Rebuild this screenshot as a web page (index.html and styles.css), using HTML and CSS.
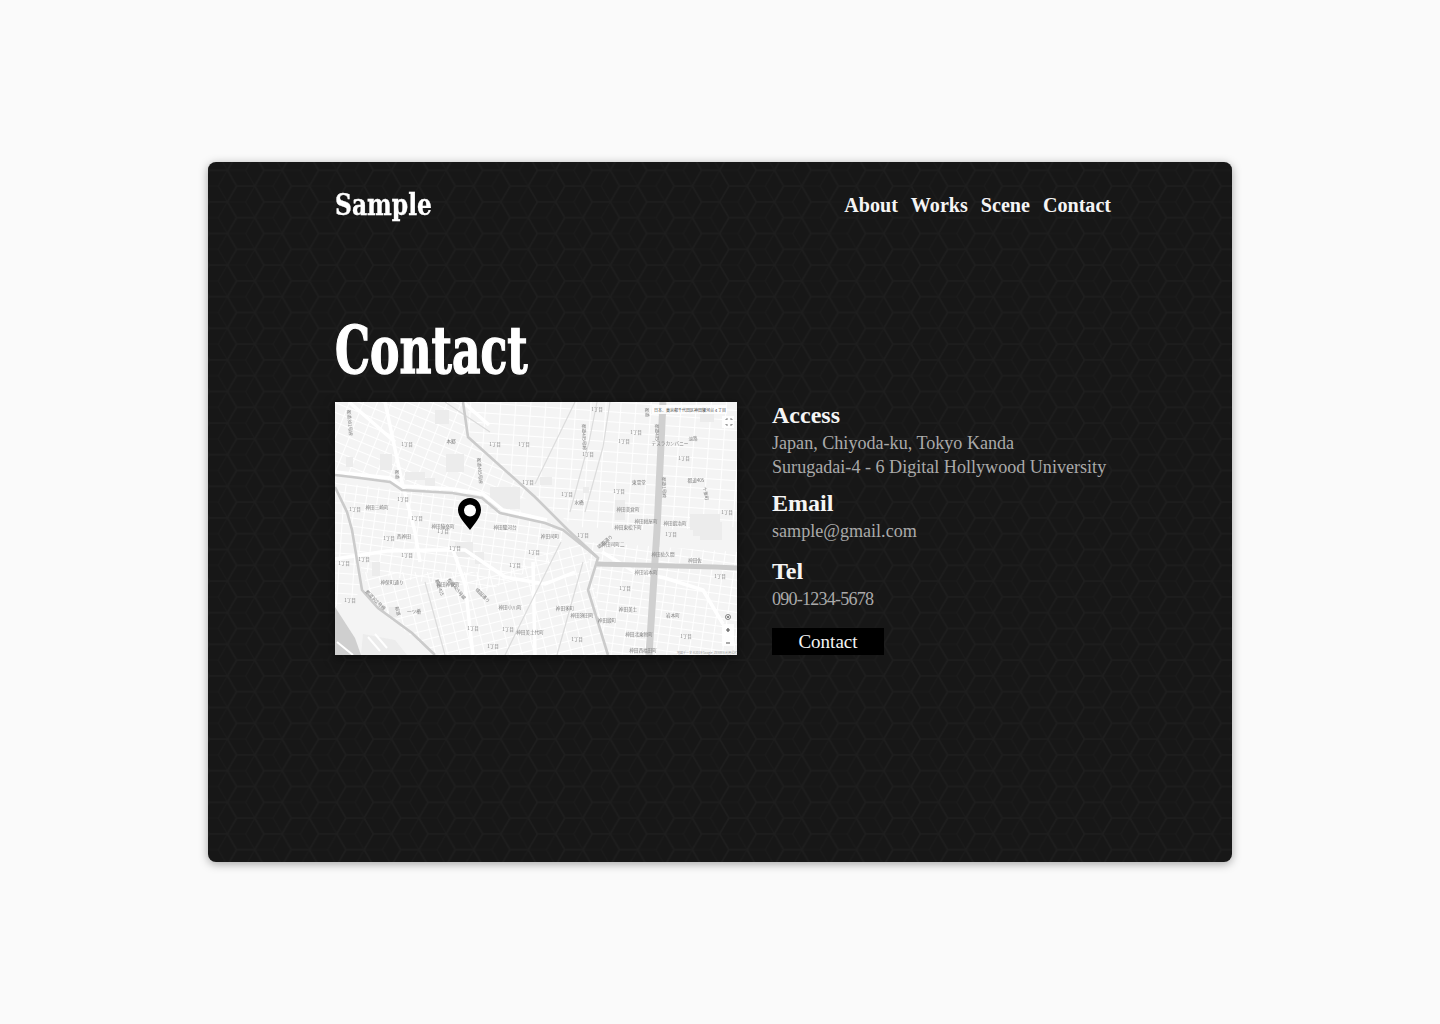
FILE: index.html
```html
<!DOCTYPE html>
<html lang="en">
<head>
<meta charset="utf-8">
<title>Sample - Contact</title>
<link rel="stylesheet" href="styles.css">
</head>
<body>
<main class="card">
  <svg class="hex-bg" width="1024" height="700" aria-hidden="true">
    <defs>
      <pattern id="hexA" width="54.7" height="31.6" patternUnits="userSpaceOnUse" patternTransform="translate(37.65 8.3)">
        <path class="hex-strong" d="M0 15.8H9.12L18.23 0H36.47L45.58 15.8H54.7M9.12 15.8L18.23 31.6H36.47L45.58 15.8"/>
      </pattern>
      <pattern id="hexB" width="54.7" height="31.6" patternUnits="userSpaceOnUse" patternTransform="translate(1.18 8.3)">
        <path class="hex-faint" d="M0 15.8H9.12L18.23 0H36.47L45.58 15.8H54.7M9.12 15.8L18.23 31.6H36.47L45.58 15.8"/>
      </pattern>
    </defs>
    <rect width="1024" height="700" fill="url(#hexB)"/>
    <rect width="1024" height="700" fill="url(#hexA)"/>
  </svg>
  <div class="inner">
    <header class="header">
      <a class="logo">Sample</a>
      <nav class="nav"><a>About</a><a>Works</a><a>Scene</a><a>Contact</a></nav>
    </header>
    <h1 class="title">Contact</h1>
    <section class="content">
      <div class="map">
        <svg class="map-svg" width="402" height="253" viewBox="0 0 402 253">
          <defs>
            <pattern id="gridA" width="15" height="10" patternUnits="userSpaceOnUse" patternTransform="rotate(4)"><path class="street" d="M0 0H15M0 0V10"/></pattern>
            <pattern id="gridB" width="13" height="9" patternUnits="userSpaceOnUse" patternTransform="rotate(22)"><path class="street" d="M0 0H13M0 0V9"/></pattern>
            <pattern id="gridC" width="12" height="9" patternUnits="userSpaceOnUse" patternTransform="rotate(-14)"><path class="street" d="M0 0H12M0 0V9"/></pattern>
            <pattern id="gridD" width="11" height="8" patternUnits="userSpaceOnUse" patternTransform="rotate(8)"><path class="street" d="M0 0H11M0 0V8"/></pattern>
          </defs>
          <g class="map-art">
            <rect class="land" width="402" height="253"/>
            <polygon fill="url(#gridB)" points="44,0 128,0 133,35 200,95 160,100 67,85 50,40"/>
            <polygon fill="url(#gridA)" points="133,0 402,0 402,125 322,128 240,125 200,95 133,35"/>
            <polygon fill="url(#gridD)" points="0,80 165,100 233,128 213,160 150,190 27,170 17,125"/>
            <polygon fill="url(#gridC)" points="27,170 150,170 250,140 273,253 100,253 40,205"/>
            <polygon fill="url(#gridD)" points="250,140 402,150 402,253 273,253"/>
            <polygon fill="url(#gridB)" points="0,0 44,0 50,40 67,82 0,72"/>
            <polygon fill="url(#gridA)" points="0,88 17,125 27,190 0,205"/>
            <g class="blocks">
              <rect x="111" y="52" width="18" height="18"/><rect x="90" y="76" width="10" height="8"/><rect x="100" y="8" width="14" height="14"/>
              <rect x="11" y="55" width="7" height="10"/><rect x="45" y="52" width="12" height="16"/><rect x="70" y="70" width="20" height="8"/>
              <rect x="155" y="85" width="30" height="22"/><rect x="365" y="6" width="14" height="14"/><rect x="280" y="98" width="10" height="20"/>
              <rect x="248" y="85" width="6" height="6"/><rect x="205" y="75" width="12" height="8"/><rect x="355" y="112" width="30" height="16"/>
              <rect x="358" y="128" width="20" height="6"/><rect x="140" y="150" width="9" height="12"/><rect x="123" y="145" width="12" height="10"/>
              <rect x="37" y="160" width="8" height="14"/><rect x="54" y="205" width="8" height="10"/>
              <rect x="120" y="140" width="18" height="14"/><rect x="365" y="120" width="22" height="18"/>
            </g>
            <path class="road-white" d="M0 70L55 76L67 84L118 87L148 92L168 108L212 118M0 157L52 149L96 148L130 148L170 175L210 182L240 170M128 0L154 23M50 0L67 80L80 130L85 160M14 0L60 40M267 150L300 170L330 176L368 188L388 222M138 253L130 182L118 148M200 253L198 160"/>
            <path class="road-thin" d="M110 0L155 30M200 82L240 0M235 110L254 40L262 0M250 110L268 45L275 0M90 180L110 253M170 253L216 160L226 140M248 160L222 253"/>
            <g class="road-gray">
              <path d="M0 73L17 75L55 80L67 88L117 91L147 96L165 111L210 121L228 128L262 155"/>
              <path d="M128 0L133 35L200 95L233 128L263 156L253 188L273 253" />
              <path d="M0 85L12 110L17 128L27 188L43 206L77 231L100 253"/>
              <path class="road-wide" d="M328 0L322 128L314 253"/>
              <path class="road-mid" d="M262 162L380 165L402 166"/>
            </g>
            <polygon class="moat" points="0,205 20,236 26,253 0,253"/>
            <polygon class="palace" points="28,232 60,238 72,253 26,253"/>
            <path class="moat-edge" d="M2 240L18 253M33 235L45 249M40 232L52 246"/>
            <g class="lbl">
              <text x="72" y="44">1丁目</text><text x="116" y="41">本郷</text><text x="160" y="44">1丁目</text><text x="189" y="44">1丁目</text>
              <text x="193" y="82">1丁目</text><text x="68" y="99">1丁目</text><text x="20" y="109">1丁目</text><text x="42" y="107">神田三崎町</text>
              <text x="82" y="118">1丁目</text><text x="108" y="126">神田猿楽町</text><text x="170" y="127">神田駿河台</text>
              <text x="262" y="9">1丁目</text><text x="301" y="32">1丁目</text><text x="289" y="41">1丁目</text><text x="253" y="54">1丁目</text>
              <text x="349" y="58">1丁目</text><text x="358" y="38">淡路</text><text x="335" y="43">テスラカンパニー</text><text x="304" y="82">東雲堂</text>
              <text x="284" y="91">1丁目</text><text x="232" y="94">1丁目</text><text x="244" y="102">水橋</text><text x="293" y="109">神田美倉町</text>
              <text x="311" y="121">神田紺屋町</text><text x="340" y="123">神田鍛冶町</text><text x="392" y="112">1丁目</text><text x="293" y="127">神田東松下町</text>
              <text x="361" y="80">都道405</text>
              <text x="54" y="138">1丁目</text><text x="69" y="136">西神田</text><text x="108" y="131">1丁目</text><text x="120" y="148">1丁目</text>
              <text x="72" y="155">1丁目</text><text x="29" y="159">1丁目</text><text x="9" y="163">1丁目</text><text x="15" y="200">1丁目</text>
              <text x="199" y="152">1丁目</text><text x="180" y="165">1丁目</text><text x="57" y="182">神保町通り</text><text x="113" y="184">神田神保町</text>
              <text x="175" y="207">神田小川町</text><text x="79" y="211">一ツ橋</text><text x="138" y="228">1丁目</text><text x="173" y="229">1丁目</text>
              <text x="195" y="232">神田美土代町</text><text x="158" y="246">1丁目</text>
              <text x="248" y="135">1丁目</text><text x="215" y="136">神田司町</text><text x="278" y="144">神田司町二</text><text x="328" y="154">神田佐久間</text>
              <text x="311" y="172">神田岩本町</text><text x="293" y="209">神田美土</text><text x="304" y="234">神田北乗物町</text><text x="272" y="220">神田鍛町</text>
              <text x="308" y="250">神田西福田町</text><text x="230" y="208">神田多町</text><text x="247" y="215">神田須田町</text><text x="338" y="215">岩本町</text>
              <text x="351" y="236">1丁目</text><text x="242" y="239">1丁目</text><text x="385" y="176">1丁目</text><text x="290" y="188">1丁目</text>
              <text x="360" y="160">神田佐</text><text x="336" y="134">1丁目</text>
              <text class="lbl-v" transform="translate(12 8) rotate(85)">都道301号線</text><text class="lbl-v" transform="translate(142 56) rotate(85)">都道405号線</text>
              <text class="lbl-v" transform="translate(60 68) rotate(85)">都道</text><text class="lbl-v" transform="translate(247 22) rotate(88)">都道405号線</text>
              <text class="lbl-v" transform="translate(310 6) rotate(85)">都道</text><text class="lbl-v" transform="translate(320 22) rotate(88)">都道405</text>
              <text class="lbl-v" transform="translate(327 75) rotate(88)">都道1号線</text><text class="lbl-v" transform="translate(368 85) rotate(80)">十番町</text>
              <text class="lbl-v" transform="translate(30 190) rotate(45)">都道302号線</text><text class="lbl-v" transform="translate(60 205) rotate(75)">都道</text>
              <text class="lbl-v" transform="translate(100 178) rotate(70)">都道405</text><text class="lbl-v" transform="translate(112 178) rotate(50)">都道405号線</text>
              <text class="lbl-v" transform="translate(140 188) rotate(45)">靖国通り</text><text class="lbl-v" transform="translate(264 147) rotate(-40)">靖国通り</text>
            </g>
          </g>
          <path class="pin" d="M135 96C128.400 96 123 101 123 108C123 115 130 121 135 128C140 121 146 115 146 108C146 101 141.600 96 135 96Z"/>
          <circle class="pin-dot" cx="135" cy="108.500" r="6"/>
          <g class="ctrl">
            <rect class="ctrl-box" x="317" y="3" width="75" height="9"/>
            <text class="ctrl-text" x="319" y="9.500">日本、東京都千代田区神田駿河台４丁目</text>
            <rect class="ctrl-box" x="387" y="14" width="12" height="12"/>
            <path class="ctrl-line" d="M391 18V17H393M397 18V17H395M391 22V23H393M397 22V23H395"/>
            <circle class="ctrl-line" cx="393" cy="215" r="2.500"/><circle class="ctrl-fill" cx="393" cy="215" r="1"/>
            <rect class="ctrl-box" x="387" y="222" width="12" height="22"/>
            <path class="ctrl-strong" d="M391 228H395M393 226V230M391 241H395"/>
            <text class="ctrl-attr" x="342" y="252">地図データ ©2019 Google, ZENRIN 利用規約</text>
          </g>
        </svg>
      </div>
      <div class="info">
        <h2 class="info-head">Access</h2>
        <p class="info-text">Japan, Chiyoda-ku, Tokyo Kanda<br>Surugadai-4 - 6 Digital Hollywood University</p>
        <h2 class="info-head info-head-email">Email</h2>
        <p class="info-text">sample@gmail.com</p>
        <h2 class="info-head info-head-tel">Tel</h2>
        <p class="info-text info-text-tel">090-1234-5678</p>
        <a class="button">Contact</a>
      </div>
    </section>
  </div>
</main>
</body>
</html>
```
FILE: styles.css
```css
* { box-sizing: border-box; }
html, body { margin: 0; height: 100%; }
body {
  background: #fafafa;
  display: flex;
  justify-content: center;
  padding-top: 162px;
  font-family: "Liberation Serif", "Noto Sans CJK JP", serif;
}
.card {
  position: relative;
  width: 1024px;
  height: 700px;
  border-radius: 8px;
  background: #171717;
  box-shadow: 0 2px 10px rgba(0, 0, 0, .35);
  overflow: hidden;
}
.hex-bg { position: absolute; inset: 0; }
.hex-strong { fill: none; stroke: #1e1e1e; stroke-width: 1.6; }
.hex-faint { fill: none; stroke: #1b1b1b; stroke-width: 1.2; }
.inner {
  position: relative;
  padding: 22px 121px 0 127px;
}
.header {
  display: flex;
  justify-content: space-between;
  align-items: center;
  height: 42px;
}
.logo {
  display: inline-block;
  font-family: "DejaVu Serif Condensed", "Liberation Serif", serif;
  font-weight: 700;
  font-size: 26px;
  line-height: 30px;
  color: #fff;
  transform: scaleY(1.15);
  -webkit-text-stroke: .3px #fff;
}
.nav { display: flex; gap: 13px; }
.nav a {
  font-size: 20.100px;
  font-weight: 700;
  color: #f5f5f5;
}
.title {
  margin: 92px 0 20px;
  height: 64px;
  line-height: 64px;
  font-family: "DejaVu Serif Condensed", "Liberation Serif", serif;
  font-size: 49px;
  font-weight: 700;
  color: #fff;
  transform: scaleY(1.35);
  -webkit-text-stroke: 1px #fff;
}
.content {
  display: flex;
  gap: 35px;
}
.map {
  width: 402px;
  height: 253px;
  flex: none;
  box-shadow: 0 3px 10px rgba(0, 0, 0, .5);
}
.map-svg { display: block; }
.map-art { filter: blur(.4px); }
.land { fill: #f4f4f4; }
.street { fill: none; stroke: #fff; stroke-width: 2.100; }
.blocks rect { fill: #ececec; }
.road-white { fill: none; stroke: #fff; stroke-width: 3.500; }
.road-thin { fill: none; stroke: #dcdcdc; stroke-width: 1.200; }
.road-gray path { fill: none; stroke: #cbcbcb; stroke-width: 2.600; }
.road-gray .road-wide { stroke: #d0d0d0; stroke-width: 7; }
.road-gray .road-mid { stroke: #cbcbcb; stroke-width: 5; }
.moat { fill: #cfcfcf; }
.palace { fill: #ececec; }
.moat-edge { fill: none; stroke: #fff; stroke-width: 2; }
.lbl text { font-size: 4.600px; fill: #808080; text-anchor: middle; font-family: "Noto Sans CJK JP", sans-serif; }
.lbl .lbl-v { text-anchor: start; }
.pin { fill: #000; }
.pin-dot { fill: #fff; }
.ctrl-box { fill: rgba(255, 255, 255, .9); }
.ctrl-text { font-size: 4px; fill: #444; font-family: "Noto Sans CJK JP", sans-serif; }
.ctrl-attr { font-size: 3px; fill: #999; font-family: "Noto Sans CJK JP", sans-serif; }
.ctrl-line { fill: none; stroke: #666; stroke-width: .8; }
.ctrl-fill { fill: #666; }
.ctrl-strong { fill: none; stroke: #555; stroke-width: 1.200; }
.info {
  flex: 1;
  display: flex;
  flex-direction: column;
  align-items: flex-start;
  margin-top: -1px;
  white-space: nowrap;
}
.info-head {
  margin: 0 0 2px;
  height: 28px;
  line-height: 28px;
  font-size: 24px;
  font-weight: 700;
  color: #f5f5f5;
}
.info-head-email { margin-top: 10px; }
.info-head-tel { margin-top: 14px; }
.info-text {
  margin: 0;
  font-size: 18.100px;
  line-height: 24px;
  color: #aaa;
}
.info-text-tel { letter-spacing: -.8px; }
.button {
  margin-top: 17px;
  width: 112px;
  height: 27px;
  line-height: 27px;
  text-align: center;
  background: #000;
  color: #f5f5f5;
  font-size: 19px;
}
```
